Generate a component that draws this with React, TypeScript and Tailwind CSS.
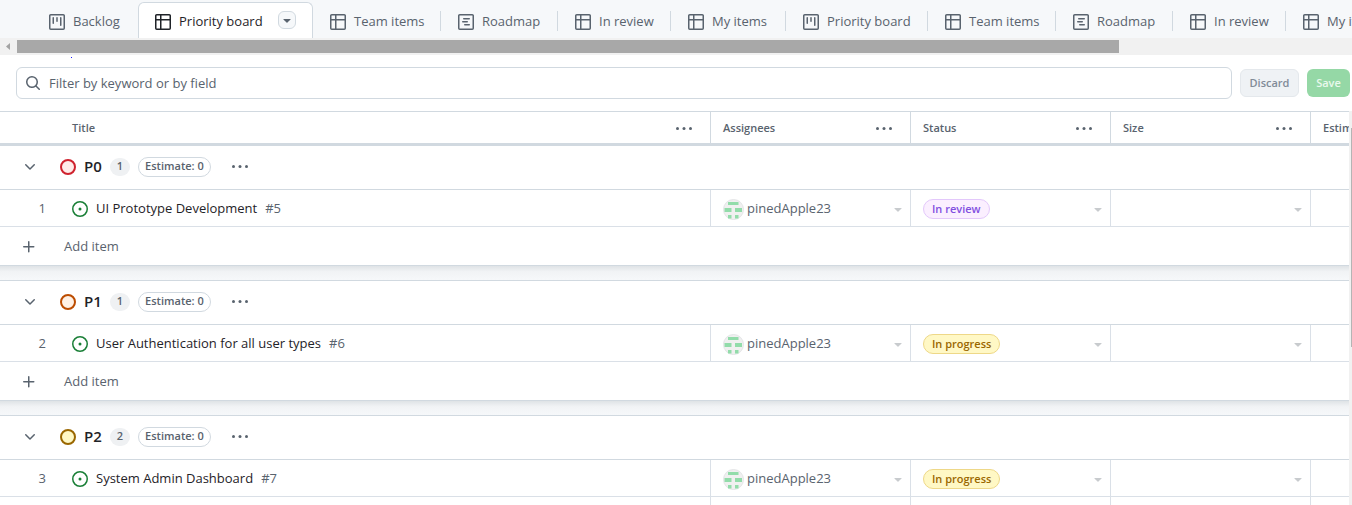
import React from "react";

type IconName =
  | "project"
  | "table"
  | "roadmap"
  | "search"
  | "chevron"
  | "plus"
  | "triangle"
  | "issue";

const ICON_PATHS: Record<IconName, string> = {
  project:
    "M1.75 0h12.5C15.216 0 16 .784 16 1.75v12.5A1.75 1.75 0 0 1 14.25 16H1.75A1.75 1.75 0 0 1 0 14.25V1.75C0 .784.784 0 1.75 0ZM1.5 1.75v12.5c0 .138.112.25.25.25h12.5a.25.25 0 0 0 .25-.25V1.75a.25.25 0 0 0-.25-.25H1.75a.25.25 0 0 0-.25.25ZM11.75 3a.75.75 0 0 1 .75.75v7.5a.75.75 0 0 1-1.5 0v-7.5a.75.75 0 0 1 .75-.75Zm-8.25.75a.75.75 0 0 1 1.5 0v5.5a.75.75 0 0 1-1.5 0ZM8 3a.75.75 0 0 1 .75.75v3.5a.75.75 0 0 1-1.5 0v-3.5A.75.75 0 0 1 8 3Z",
  table:
    "M0 1.75C0 .784.784 0 1.75 0h12.5C15.216 0 16 .784 16 1.75v12.5A1.75 1.75 0 0 1 14.25 16H1.75A1.75 1.75 0 0 1 0 14.25ZM6.5 6.5v8h7.75a.25.25 0 0 0 .25-.25V6.5Zm8-1.5V1.75a.25.25 0 0 0-.25-.25H6.5V5Zm-13 1.5v7.75c0 .138.112.25.25.25H5v-8ZM5 5V1.5H1.75a.25.25 0 0 0-.25.25V5Z",
  roadmap:
    "M4.75 7a.75.75 0 0 0 0 1.5h4.5a.75.75 0 0 0 0-1.5h-4.5ZM5 4.75A.75.75 0 0 1 5.75 4h5.5a.75.75 0 0 1 0 1.5h-5.5A.75.75 0 0 1 5 4.75ZM6.75 10a.75.75 0 0 0 0 1.5h4.5a.75.75 0 0 0 0-1.5h-4.5Z M0 1.75C0 .784.784 0 1.75 0h12.5C15.216 0 16 .784 16 1.75v12.5A1.75 1.75 0 0 1 14.25 16H1.75A1.75 1.75 0 0 1 0 14.25Zm1.75-.25a.25.25 0 0 0-.25.25v12.5c0 .138.112.25.25.25h12.5a.25.25 0 0 0 .25-.25V1.75a.25.25 0 0 0-.25-.25Z",
  search:
    "M10.68 11.74a6 6 0 0 1-7.922-8.982 6 6 0 0 1 8.982 7.922l3.04 3.04a.749.749 0 0 1-.326 1.275.749.749 0 0 1-.734-.215ZM11.5 7a4.499 4.499 0 1 0-8.997 0A4.499 4.499 0 0 0 11.5 7Z",
  chevron:
    "M12.78 5.22a.749.749 0 0 1 0 1.06l-4.25 4.25a.749.749 0 0 1-1.06 0L3.22 6.28a.749.749 0 1 1 1.06-1.06L8 8.939l3.72-3.719a.749.749 0 0 1 1.06 0Z",
  plus: "M7.75 2a.75.75 0 0 1 .75.75V7h4.25a.75.75 0 0 1 0 1.5H8.5v4.25a.75.75 0 0 1-1.5 0V8.5H2.75a.75.75 0 0 1 0-1.5H7V2.75A.75.75 0 0 1 7.75 2Z",
  triangle:
    "m4.427 7.427 3.396 3.396a.25.25 0 0 0 .354 0l3.396-3.396A.25.25 0 0 0 11.396 7H4.604a.25.25 0 0 0-.177.427Z",
  issue:
    "M8 9.5a1.5 1.5 0 1 0 0-3 1.5 1.5 0 0 0 0 3Z M8 0a8 8 0 1 1 0 16A8 8 0 0 1 8 0ZM1.5 8a6.5 6.5 0 1 0 13 0 6.5 6.5 0 0 0-13 0Z",
};

function Icon({ name, className = "" }: { name: IconName; className?: string }) {
  return (
    <svg
      viewBox="0 0 16 16"
      width="16"
      height="16"
      fill="currentColor"
      fillRule="evenodd"
      aria-hidden="true"
      className={`shrink-0 ${className}`}
    >
      <path d={ICON_PATHS[name]} />
    </svg>
  );
}

function Dots() {
  return (
    <svg viewBox="0 0 18 16" width="18" height="16" fill="currentColor" aria-hidden="true">
      <circle cx="2.5" cy="7.5" r="1.5" />
      <circle cx="9" cy="7.5" r="1.5" />
      <circle cx="15.5" cy="7.5" r="1.5" />
    </svg>
  );
}

function Avatar() {
  return (
    <svg viewBox="0 0 21 21" width="21" height="21" aria-hidden="true" className="shrink-0">
      <circle cx="10.5" cy="10.5" r="10" fill="#f0f0f0" stroke="#e3e4e6" />
      <g fill="#92dcaa">
        <rect x="5" y="3" width="10.5" height="3" />
        <rect x="1.5" y="9" width="7" height="4" />
        <rect x="12" y="9" width="7" height="4" />
        <rect x="5" y="16" width="3.5" height="3.5" />
        <rect x="12" y="16" width="3.5" height="3.5" />
      </g>
    </svg>
  );
}

const TABS: { icon: IconName; label: string; width: string }[] = [
  { icon: "table", label: "Team items", width: "w-32" },
  { icon: "roadmap", label: "Roadmap", width: "w-[117px]" },
  { icon: "table", label: "In review", width: "w-[113px]" },
  { icon: "table", label: "My items", width: "w-[115px]" },
  { icon: "project", label: "Priority board", width: "w-[142px]" },
  { icon: "table", label: "Team items", width: "w-32" },
  { icon: "roadmap", label: "Roadmap", width: "w-[117px]" },
  { icon: "table", label: "In review", width: "w-[113px]" },
  { icon: "table", label: "My items", width: "w-[115px]" },
];

function Tabs() {
  return (
    <nav
      aria-label="Views"
      className="flex h-[38px] shrink-0 items-end overflow-hidden bg-[#f6f8fa] pl-8 text-[13px] text-[#59636e]"
    >
      <a href="#backlog" className="flex h-9 w-[106px] shrink-0 items-center gap-2 pt-1 pl-[17px]">
        <Icon name="project" />
        Backlog
      </a>
      <div className="flex h-9 w-[175px] shrink-0 items-center rounded-t-md border border-b-0 border-[#d1d9e0] bg-white pt-[3px] pl-4 text-[#1f2328]">
        <a href="#priority" aria-current="page" className="flex grow items-center gap-2">
          <Icon name="table" />
          Priority board
        </a>
        <button
          type="button"
          aria-label="View options"
          className="mr-4 mb-1 flex size-[18px] items-center justify-center rounded-md border border-[#d1d9e0] bg-[#f6f8fa] text-[#59636e]"
        >
          <Icon name="triangle" />
        </button>
      </div>
      {TABS.map((tab, i) => (
        <a
          key={i}
          href={`#view-${i}`}
          className={`flex h-9 shrink-0 items-center pt-1 pl-[17px] ${tab.width}`}
        >
          <span className="flex grow items-center gap-2 whitespace-nowrap">
            <Icon name={tab.icon} />
            {tab.label}
          </span>
          <span className="mb-0.5 h-5 w-px shrink-0 bg-[#d1d9e0]" />
        </a>
      ))}
    </nav>
  );
}

function HorizontalScroll() {
  return (
    <div className="flex h-[17px] shrink-0 items-center bg-[#f1f1f1]">
      <svg viewBox="0 0 17 17" width="17" height="17" aria-hidden="true" className="shrink-0">
        <path d="M10 5v7L6 8.5Z" fill="#a3a3a3" />
      </svg>
      <div className="h-[13px] w-[81.5%] bg-[#a8a8a8]" />
    </div>
  );
}

function FilterBar() {
  return (
    <div className="flex shrink-0 items-center gap-2 pt-2 pr-0.5 pb-3 pl-4">
      <label className="flex h-8 grow items-center gap-2 rounded-md border border-[#d1d9e0] px-2 text-[#59636e]">
        <Icon name="search" />
        <input
          type="text"
          aria-label="Filter"
          placeholder="Filter by keyword or by field"
          className="grow bg-transparent pt-0.5 text-[13px] outline-none placeholder:text-[#59636e]"
        />
      </label>
      <button
        type="button"
        className="h-7 w-[59px] rounded-md border border-[#e4e8ec] bg-[#eff2f5] pt-px text-[11px] font-semibold text-[#818b98]"
      >
        Discard
      </button>
      <button
        type="button"
        className="h-7 w-[43px] rounded-md bg-[#95d8a6] pt-px text-[11px] font-semibold text-[#e9f8ed]"
      >
        Save
      </button>
    </div>
  );
}

interface Item {
  row: number;
  title: string;
  number: string;
  status: "In review" | "In progress";
}

interface Group {
  name: string;
  count: number;
  dot: string;
  items: Item[];
  open: boolean;
}

const GROUPS: Group[] = [
  {
    name: "P0",
    count: 1,
    dot: "border-[#cf222e] bg-[#ffebe9]",
    items: [{ row: 1, title: "UI Prototype Development", number: "#5", status: "In review" }],
    open: false,
  },
  {
    name: "P1",
    count: 1,
    dot: "border-[#bc4c00] bg-[#fff1e5]",
    items: [
      { row: 2, title: "User Authentication for all user types", number: "#6", status: "In progress" },
    ],
    open: false,
  },
  {
    name: "P2",
    count: 2,
    dot: "border-[#9a6700] bg-[#fff8c5]",
    items: [{ row: 3, title: "System Admin Dashboard", number: "#7", status: "In progress" }],
    open: true,
  },
];

const STATUS_STYLE = {
  "In review": "border-[#e3c8fb] bg-[#fbefff] text-[#8250df]",
  "In progress": "border-[#eed888] bg-[#fff8c5] text-[#9a6700]",
};

const CELL = "h-[37px] border-r border-b border-[#dae0e7] p-0 pt-0.5";

function CellMenu() {
  return (
    <button type="button" aria-label="Edit value" className="ml-auto text-[#c8cbce]">
      <Icon name="triangle" />
    </button>
  );
}

function ItemRow({ item }: { item: Item }) {
  return (
    <tr>
      <td className={CELL}>
        <div className="flex items-center">
          <span className="w-[46px] text-right text-[#59636e]">{item.row}</span>
          <Icon name="issue" className="mr-2 ml-[26px] text-[#1a7f37]" />
          <a href={item.number} className="text-[#1f2328]">
            {item.title}
          </a>
          <span className="ml-2 text-[#59636e]">{item.number}</span>
        </div>
      </td>
      <td className={CELL}>
        <div className="flex items-center gap-[3px] pr-1 pl-3 text-[#59636e]">
          <Avatar />
          pinedApple23
          <CellMenu />
        </div>
      </td>
      <td className={CELL}>
        <div className="flex items-center pr-1 pl-3">
          <span
            className={`flex h-5 items-center rounded-full border px-2 text-[11px] font-semibold ${STATUS_STYLE[item.status]}`}
          >
            {item.status}
          </span>
          <CellMenu />
        </div>
      </td>
      <td className={CELL}>
        <div className="flex items-center pr-1">
          <CellMenu />
        </div>
      </td>
      <td className={CELL} />
    </tr>
  );
}

function GroupBody({ group }: { group: Group }) {
  return (
    <tbody>
      <tr>
        <th
          colSpan={5}
          scope="rowgroup"
          className="h-11 border-b border-[#d1d9e0] p-0 pb-0.5 text-left font-semibold"
        >
          <div className="flex items-center text-[#59636e]">
            <button type="button" aria-label={`Collapse ${group.name}`} className="mr-[22px] ml-[22px]">
              <Icon name="chevron" />
            </button>
            <span className={`size-4 rounded-full border-2 ${group.dot}`} />
            <span className="ml-2 text-[15px] text-[#1f2328]">{group.name}</span>
            <span className="ml-2 flex h-[18px] items-center rounded-full bg-[#eff1f3] px-[7px] text-[11px]">
              {group.count}
            </span>
            <span className="ml-2 flex h-5 items-center rounded-full border border-[#d1d9e0] px-1.5 text-[11px]">
              Estimate: 0
            </span>
            <button type="button" aria-label={`${group.name} options`} className="ml-5">
              <Dots />
            </button>
          </div>
        </th>
      </tr>
      {group.items.map((item) => (
        <ItemRow key={item.row} item={item} />
      ))}
      {group.open ? (
        <tr>
          <td className={CELL} />
          <td className={CELL} />
          <td className={CELL} />
          <td className={CELL} />
          <td className={CELL} />
        </tr>
      ) : (
        <>
          <tr>
            <td colSpan={5} className="h-[38px] p-0 pt-0.5">
              <button type="button" className="flex items-center text-[#59636e]">
                <Icon name="plus" className="mr-[27px] ml-[21px]" />
                Add item
              </button>
            </td>
          </tr>
          <tr>
            <td
              colSpan={5}
              className="h-4 border-t border-b border-t-[#d1d9e0] border-b-[#d1d9e0] bg-linear-to-b from-[#dfe3e6] via-[#f1f3f5] via-40% to-[#f6f8fa] p-0"
            />
          </tr>
        </>
      )}
    </tbody>
  );
}

const COLUMNS = ["Title", "Assignees", "Status", "Size", "Estimate"];

function Board() {
  return (
    <div className="flex min-h-0 grow">
      <div className="min-w-0 grow overflow-hidden">
        <table className="w-[1511px] table-fixed border-separate border-spacing-0 text-[13px]">
          <colgroup>
            <col />
            <col className="w-[200px]" />
            <col className="w-[200px]" />
            <col className="w-[200px]" />
            <col className="w-[200px]" />
          </colgroup>
          <thead>
            <tr>
              {COLUMNS.map((name) => (
                <th
                  key={name}
                  scope="col"
                  className={`h-[35px] border-t border-r border-b-3 border-[#d1d9e0] p-0 pt-0.5 text-left text-[11px] font-semibold text-[#59636e] ${
                    name === "Title" ? "pl-[72px]" : "pl-3"
                  }`}
                >
                  <div className="flex items-center justify-between pr-[17px]">
                    {name}
                    <button type="button" aria-label={`${name} column options`}>
                      <Dots />
                    </button>
                  </div>
                </th>
              ))}
            </tr>
          </thead>
          {GROUPS.map((group) => (
            <GroupBody key={group.name} group={group} />
          ))}
        </table>
      </div>
      <div className="flex w-[3px] shrink-0 flex-col items-end bg-[#f1f1f1] pt-[17px]">
        <div className="h-[58%] w-px bg-[#b4b4b4]" />
      </div>
    </div>
  );
}

export default function App() {
  return (
    <div className="flex h-screen flex-col overflow-hidden bg-white font-['Open_Sans',sans-serif]">
      <Tabs />
      <HorizontalScroll />
      <div className="flex h-1 shrink-0 items-center pl-[71px]">
        <span className="size-px bg-[#1a1aff]" />
      </div>
      <FilterBar />
      <Board />
    </div>
  );
}
